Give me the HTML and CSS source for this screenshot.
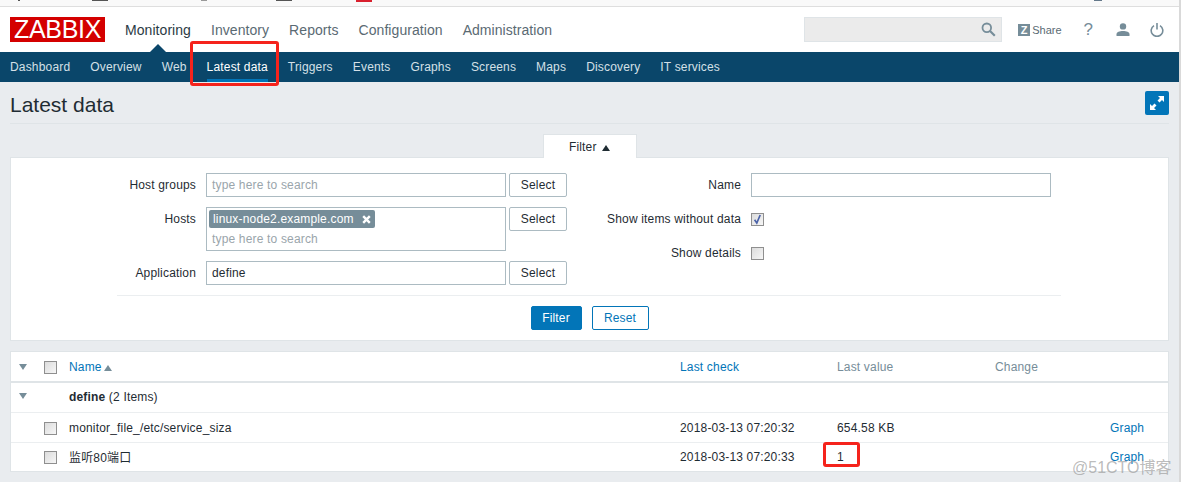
FILE: index.html
```html
<!DOCTYPE html>
<html lang="en">
<head>
    <meta charset="UTF-8">
    <title>Latest data</title>
    <link rel="stylesheet" href="styles.css">
</head>
<body>
    <div id="wrapper">
        <!-- what is left of the browser toolbar -->
        <div class="browser-strip">
            <span class="tick tick-a"></span>
            <span class="tick tick-b"></span>
            <span class="tick tick-c"></span>
            <span class="tick tick-d"></span>
            <span class="tick tick-e"></span>
            <span class="tick tick-f"></span>
        </div>

        <div class="header">
            <div class="logo">ZABBIX</div>
            <ul class="main-menu">
                <li class="active">Monitoring</li>
                <li>Inventory</li>
                <li>Reports</li>
                <li>Configuration</li>
                <li>Administration</li>
            </ul>
            <div class="search">
                <svg width="15" height="15" viewBox="0 0 15 15"><circle cx="5.8" cy="5.8" r="4.3" fill="none" stroke="#768d99" stroke-width="1.8"/><path d="M9 9l4.8 4.8" stroke="#768d99" stroke-width="2.2"/></svg>
            </div>
            <div class="share">
                <span class="share-z">Z</span>
                <span>Share</span>
            </div>
            <div class="help">?</div>
            <svg class="icon-user" width="14" height="13" viewBox="0 0 14 13"><circle cx="7" cy="3.4" r="3.2" fill="#768d99"/><path d="M0.5 13v-1.8c0-2 3-3.2 6.5-3.2s6.5 1.2 6.5 3.2V13z" fill="#768d99"/></svg>
            <svg class="icon-power" width="14" height="14" viewBox="0 0 14 14"><path d="M4 2.6a5.8 5.8 0 1 0 6 0" fill="none" stroke="#768d99" stroke-width="1.6"/><path d="M7 0v6.5" stroke="#768d99" stroke-width="1.6"/></svg>
        </div>

        <ul class="sub-menu">
            <li>Dashboard</li>
            <li>Overview</li>
            <li>Web</li>
            <li class="active">Latest data</li>
            <li>Triggers</li>
            <li>Events</li>
            <li>Graphs</li>
            <li>Screens</li>
            <li>Maps</li>
            <li>Discovery</li>
            <li>IT services</li>
        </ul>

        <div class="content">
            <div class="title-bar">
                <h1>Latest data</h1>
                <div class="fullscreen">
                    <svg width="14" height="14" viewBox="0 0 14 14"><path d="M8 0h6v6l-2-2-2.5 2.5-2-2L10 2zM6 14H0V8l2 2 2.5-2.5 2 2L4 12z" fill="#fff"/></svg>
                </div>
            </div>

            <div class="filter-tab-row">
                <div class="filter-tab">Filter <span class="tab-arrow"></span></div>
            </div>

            <div class="filter-panel">
                <div class="filter-cols">
                    <div class="filter-left">
                        <label>Host groups</label>
                        <div class="field">
                            <div class="input placeholder">type here to search</div>
                            <div class="btn-select">Select</div>
                        </div>
                        <label>Hosts</label>
                        <div class="field">
                            <div class="input multi">
                                <span class="chip">linux-node2.example.com
                                    <svg width="9" height="9" viewBox="0 0 9 9"><path d="M1.2 1.2l6.6 6.6M7.8 1.2L1.2 7.8" stroke="#fff" stroke-width="2.4"/></svg>
                                </span>
                                <span class="placeholder multi-hint">type here to search</span>
                            </div>
                            <div class="btn-select">Select</div>
                        </div>
                        <label>Application</label>
                        <div class="field">
                            <div class="input">define</div>
                            <div class="btn-select">Select</div>
                        </div>
                    </div>
                    <div class="filter-right">
                        <label>Name</label>
                        <div class="input"></div>
                        <label>Show items without data</label>
                        <div class="check-cell">
                            <span class="check">
                                <svg width="11" height="11" viewBox="0 0 11 11"><path d="M2.6 5.8l2.2 3.2 3.4-8" fill="none" stroke="#4a62a8" stroke-width="1.7"/></svg>
                            </span>
                        </div>
                        <label>Show details</label>
                        <div class="check-cell"><span class="check"></span></div>
                    </div>
                </div>
                <div class="filter-buttons">
                    <div class="btn-primary">Filter</div>
                    <div class="btn-outline">Reset</div>
                </div>
            </div>

            <table class="data-table">
                <colgroup>
                    <col class="col-arrow">
                    <col class="col-check">
                    <col class="col-name">
                    <col class="col-time">
                    <col class="col-value">
                    <col class="col-change">
                    <col class="col-info">
                </colgroup>
                <tr class="head-row">
                    <td><span class="arrow-down"></span></td>
                    <td><span class="check"></span></td>
                    <td><a class="link">Name</a> <span class="sort-up"></span></td>
                    <td><a class="link">Last check</a></td>
                    <td class="muted">Last value</td>
                    <td class="muted">Change</td>
                    <td></td>
                </tr>
                <tr class="group-row">
                    <td><span class="arrow-down"></span></td>
                    <td></td>
                    <td colspan="5"><b>define</b> (2 Items)</td>
                </tr>
                <tr>
                    <td></td>
                    <td><span class="check"></span></td>
                    <td>monitor_file_/etc/service_siza</td>
                    <td>2018-03-13 07:20:32</td>
                    <td>654.58 KB</td>
                    <td></td>
                    <td><a class="link">Graph</a></td>
                </tr>
                <tr class="last-row">
                    <td></td>
                    <td><span class="check"></span></td>
                    <td>监听80端口</td>
                    <td>2018-03-13 07:20:33</td>
                    <td>1</td>
                    <td></td>
                    <td><a class="link">Graph</a></td>
                </tr>
            </table>
        </div>

        <!-- annotations drawn over the screenshot -->
        <div class="mark mark-menu"></div>
        <div class="mark mark-value"></div>
        <div class="watermark">@51CTO博客</div>
    </div>
</body>
</html>
```

FILE: styles.css
```css
*{
    box-sizing: border-box;
}
html, body{
    margin: 0;
    padding: 0;
}
body{
    width: 1181px;
    height: 482px;
    overflow: hidden;
    background: #d9d9d9;
    font-family: "Liberation Sans", "Noto Sans CJK SC", sans-serif;
    font-size: 12px;
    letter-spacing: 0.17px;
    color: #1f2c33;
}
ul{
    list-style: none;
    margin: 0;
    padding: 0;
}
#wrapper{
    position: relative;
    width: 1179px;
    height: 482px;
    background: #e9ecef;
}

/* browser strip */
.browser-strip{
    display: flex;
    height: 7px;
    background: #f9f9f9;
    border-bottom: 1px solid #dedede;
}
.tick{
    height: 1px;
    background: #555;
}
.tick-a{ width: 2px; margin-left: 18px; }
.tick-b{ width: 16px; margin-left: 72px; }
.tick-c{ width: 6px; margin-left: 93px; background: #999; }
.tick-d{ width: 16px; margin-left: 69px; }
.tick-e{ width: 16px; height: 2px; margin-left: 64px; background: #d9202e; }
.tick-f{ width: 8px; margin-left: 722px; background: #64788a; }

/* header */
.header{
    display: flex;
    align-items: center;
    height: 45px;
    padding-left: 10px;
    background: #fff;
}
.logo{
    width: 95px;
    height: 25px;
    background: #d40000;
    color: #fff;
    font-size: 25px;
    line-height: 25px;
    letter-spacing: -0.3px;
    text-align: center;
}
.main-menu{
    display: flex;
    gap: 20px;
    margin-left: 20px;
    font-size: 14px;
    letter-spacing: 0.06px;
    color: #5a6a73;
}
.main-menu li{
    position: relative;
}
.main-menu .active{
    color: #2b3a44;
}
.main-menu .active::after{
    content: "";
    position: absolute;
    left: 25px;
    top: 22px;
    border: 8px solid transparent;
    border-top: 0;
    border-bottom-color: #0a466a;
}
.search{
    display: flex;
    align-items: center;
    justify-content: flex-end;
    width: 198px;
    height: 25px;
    margin-left: auto;
    padding-right: 5px;
    background: #ebebeb;
    border: 1px solid #dfe4e7;
}
.share{
    display: flex;
    align-items: center;
    gap: 2px;
    margin-left: 16px;
    font-size: 11px;
    letter-spacing: 0;
    color: #5a6a73;
}
.share-z{
    width: 12px;
    height: 12px;
    background: #768d99;
    color: #fff;
    font-size: 11px;
    font-weight: bold;
    line-height: 12px;
    text-align: center;
}
.help{
    margin-left: 22px;
    font-size: 17px;
    letter-spacing: 0;
    color: #768d99;
}
.icon-user{
    margin-left: 23px;
}
.icon-power{
    margin-left: 20px;
    margin-right: 15px;
}

/* second menu */
.sub-menu{
    display: flex;
    gap: 20px;
    height: 30px;
    padding-left: 10px;
    background: #0a466a;
    color: #d5e0e7;
    line-height: 30px;
}
.sub-menu .active{
    color: #fff;
    border-bottom: 3px solid #0275b8;
}

/* page */
.content{
    padding: 0 10px;
}
.title-bar{
    display: flex;
    align-items: center;
    justify-content: space-between;
    height: 42px;
    border-bottom: 1px solid #dfe4e7;
}
h1{
    margin: 4px 0 0;
    font-size: 21px;
    font-weight: normal;
    letter-spacing: 0;
}
.fullscreen{
    display: flex;
    align-items: center;
    justify-content: center;
    width: 24px;
    height: 24px;
    background: #0275b8;
    border-radius: 2px;
}

/* filter */
.filter-tab-row{
    display: flex;
    justify-content: center;
    margin-top: 10px;
}
.filter-tab{
    width: 94px;
    height: 24px;
    background: #fff;
    border: 1px solid #dfe4e7;
    border-bottom: 0;
    line-height: 24px;
    text-align: center;
}
.tab-arrow{
    display: inline-block;
    margin-left: 2px;
    border: 4px solid transparent;
    border-top: 0;
    border-bottom: 6px solid #1f2c33;
}
.filter-panel{
    height: 184px;
    margin-top: -1px;
    background: #fff;
    border: 1px solid #dfe4e7;
}
.filter-cols{
    display: flex;
    align-items: flex-start;
    margin: 15px 107px 0 106px;
    padding-bottom: 10px;
    height: 123px;
    border-bottom: 1px solid #ebeef0;
}
.filter-left{
    display: grid;
    grid-template-columns: 79px auto;
    grid-template-rows: 24px 44px 24px;
    gap: 10px;
    width: 450px;
}
.filter-right{
    display: grid;
    grid-template-columns: 174px 300px;
    grid-template-rows: 24px 24px 24px;
    gap: 10px;
}
label{
    line-height: 24px;
    text-align: right;
    white-space: nowrap;
}
.field{
    display: flex;
    align-items: flex-start;
    gap: 3px;
}
.input{
    width: 300px;
    height: 24px;
    padding-left: 5px;
    background: #fff;
    border: 1px solid #acbbc2;
    line-height: 22px;
}
.placeholder{
    color: #9aa5ab;
}
.multi{
    display: flex;
    flex-direction: column;
    align-items: flex-start;
    height: 44px;
    padding: 2px 0 0 2px;
}
.chip{
    display: flex;
    align-items: center;
    gap: 8px;
    height: 18px;
    padding: 0 4px;
    background: #768d99;
    border-radius: 2px;
    color: #fff;
    line-height: 18px;
}
.multi-hint{
    margin: 1px 0 0 3px;
    line-height: 20px;
}
.btn-select{
    width: 58px;
    height: 24px;
    background: #fff;
    border: 1px solid #acbbc2;
    border-radius: 2px;
    line-height: 22px;
    text-align: center;
}
.check-cell{
    display: flex;
    align-items: center;
}
.check{
    display: inline-flex;
    align-items: center;
    justify-content: center;
    width: 13px;
    height: 13px;
    background: linear-gradient(135deg, #dcdcdc, #f6f6f6);
    border: 1px solid #8f8f8f;
    vertical-align: middle;
}
.filter-buttons{
    display: flex;
    justify-content: center;
    gap: 10px;
    margin-top: 10px;
}
.btn-primary, .btn-outline{
    height: 24px;
    border: 1px solid #0275b8;
    border-radius: 2px;
    line-height: 22px;
    text-align: center;
}
.btn-primary{
    width: 51px;
    background: #0275b8;
    color: #fff;
}
.btn-outline{
    width: 57px;
    background: #fff;
    color: #0275b8;
}

/* table */
.data-table{
    width: 1159px;
    height: 121px;
    margin-top: 10px;
    background: #fff;
    border: 1px solid #dfe4e7;
    border-collapse: separate;
    border-spacing: 0;
    table-layout: fixed;
}
.col-arrow{ width: 33px; }
.col-check{ width: 25px; }
.col-name{ width: 611px; }
.col-time{ width: 157px; }
.col-value{ width: 158px; }
.col-change{ width: 115px; }
.col-info{ width: 58px; }
.data-table td{
    height: 30px;
    padding: 0;
    border-bottom: 1px solid #ebeef0;
}
.data-table td:first-child{
    padding-left: 8px;
}
.data-table .head-row td{
    height: 31px;
    border-bottom: 2px solid #dfe4e7;
}
.data-table .last-row td{
    height: 28px;
    padding-bottom: 1px;
    border-bottom: 0;
}
.group-row td{
    vertical-align: top;
    padding-top: 7px;
}
.data-table .group-row td:first-child{
    padding-top: 10px;
}
.link{
    color: #0275b8;
}
.muted{
    color: #768d99;
}
.arrow-down{
    display: block;
    width: 0;
    border: 4px solid transparent;
    border-bottom: 0;
    border-top: 6px solid #768d99;
}
.sort-up{
    display: inline-block;
    margin-left: -1px;
    border: 4px solid transparent;
    border-top: 0;
    border-bottom: 6px solid #768d99;
}

/* red marks and watermark */
.mark{
    position: absolute;
    border: 3px solid #f5231c;
    border-radius: 3px;
}
.mark-menu{
    left: 190px;
    top: 41px;
    width: 89px;
    height: 45px;
}
.mark-value{
    left: 823px;
    top: 442px;
    width: 37px;
    height: 25px;
}
.watermark{
    position: absolute;
    left: 1072px;
    top: 454px;
    color: rgba(150, 150, 150, 0.65);
    font-size: 16px;
    letter-spacing: 0;
    white-space: nowrap;
}
```
